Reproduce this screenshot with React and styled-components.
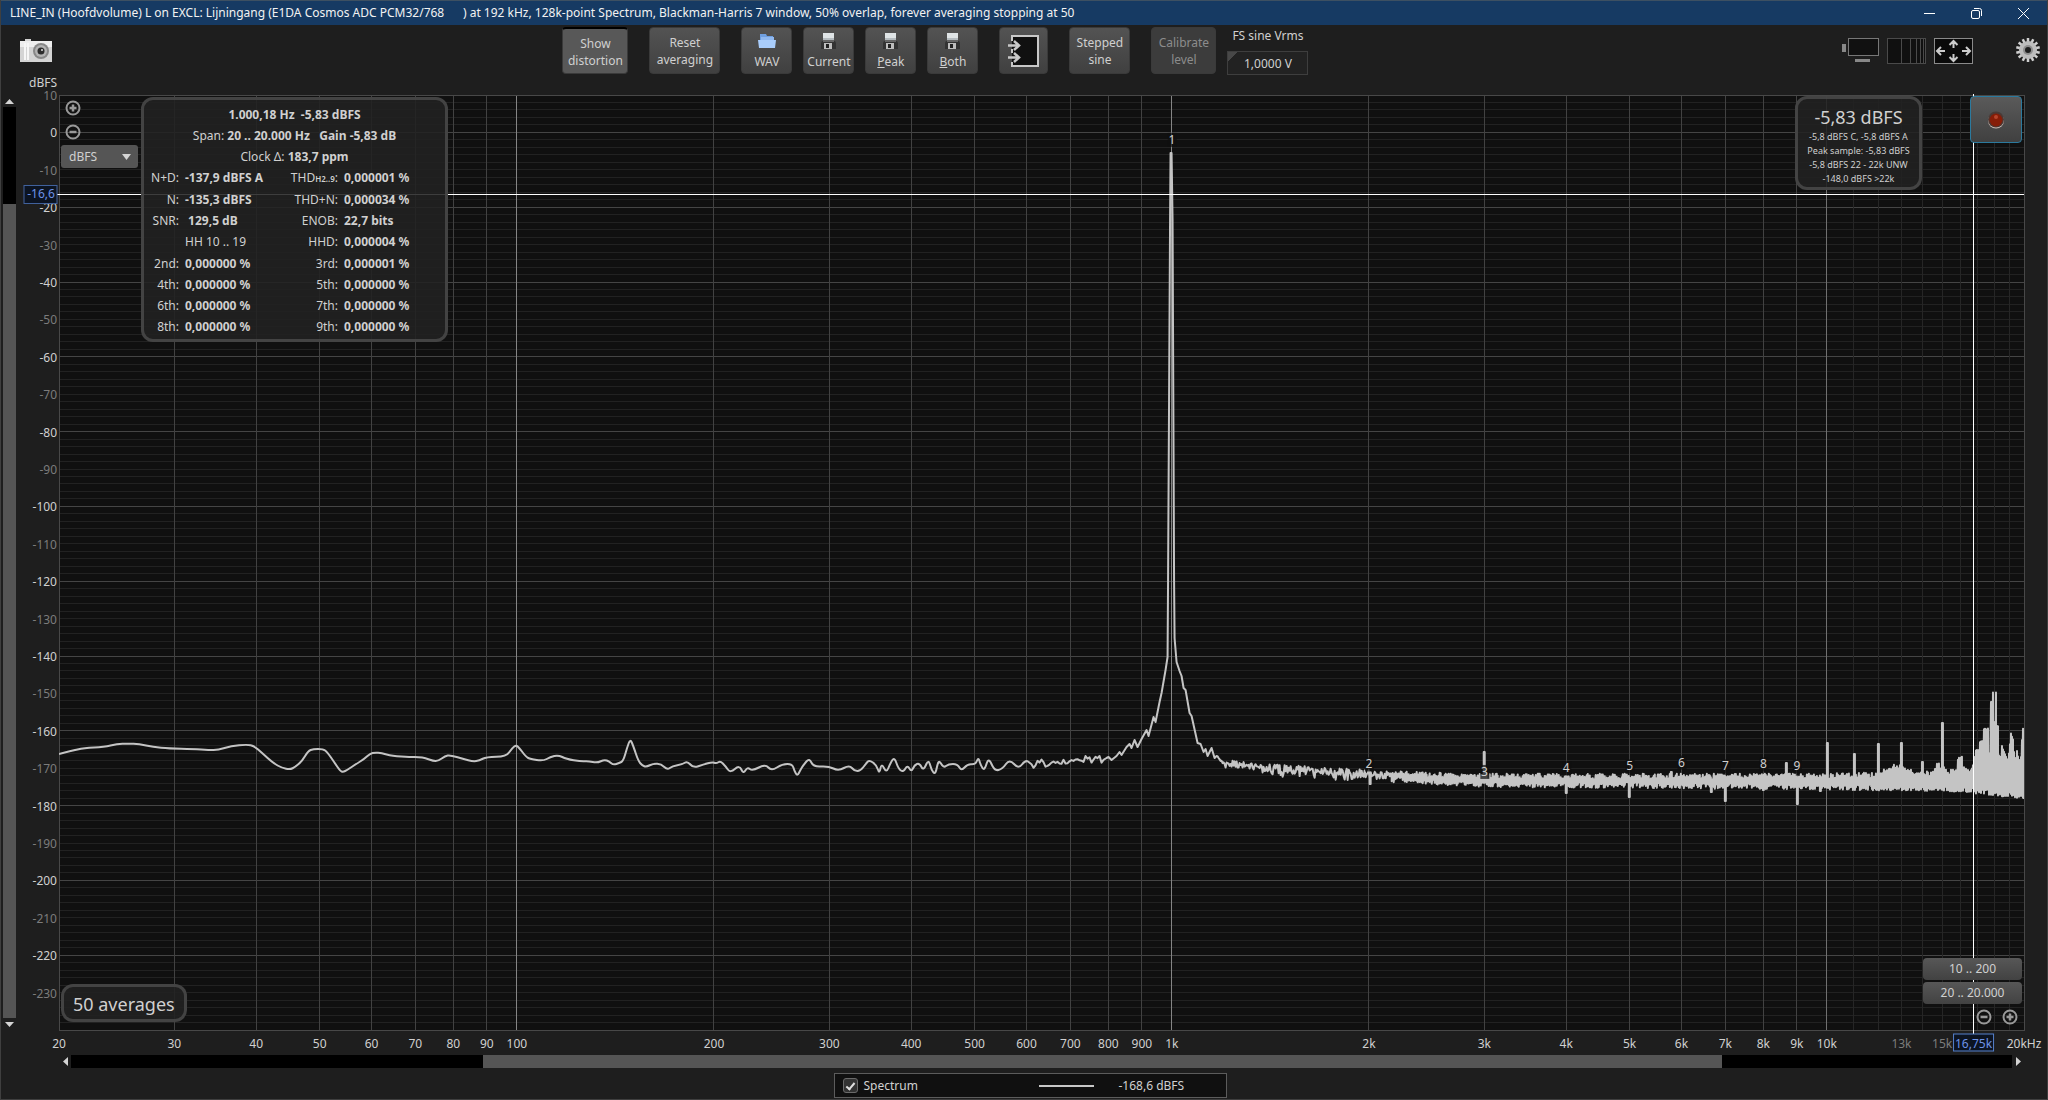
import { useState } from "react";
import styled, { createGlobalStyle } from "styled-components";

const GlobalStyle = createGlobalStyle`
  *, *::before, *::after {
    box-sizing: border-box;
  }
  body {
    margin: 0;
    background: #1e1e1e;
  }
  body, button, input, select {
    font-family: "Noto Sans", "Open Sans", sans-serif;
    font-size: 12px;
    line-height: 16px;
    color: #d0d0d0;
  }
`;

const Window = styled.div`
  display: flex;
  flex-direction: column;
  min-height: 100vh;
  border: solid #3f3f3f;
  border-width: 0 1px 1px;
`;

const TitleBar = styled.header`
  display: flex;
  align-items: center;
  justify-content: space-between;
  height: 25px;
  padding-left: 9px;
  background: #163a63;
  border-top: 1px solid #3d5062;
`;

const Title = styled.h1`
  margin: 0;
  font-size: 12px;
  font-weight: 400;
  line-height: 24px;
  color: #f2f2f2;
  white-space: pre;
`;

const WindowButtons = styled.div`
  display: flex;
`;

const WindowButton = styled.button`
  display: grid;
  place-items: center;
  width: 47px;
  height: 24px;
  padding: 0;
  border: 0;
  background: none;
`;

const Toolbar = styled.div`
  display: grid;
  grid-template-columns: 542fr auto 731fr;
  padding: 2px 7px 0 19px;
  height: 49px;
`;

const ToolGroup = styled.div`
  display: flex;
  gap: ${(props) => props.$gap || 11}px;
`;

const IconTools = styled.div`
  display: flex;
  align-items: flex-start;
  justify-content: ${(props) => (props.$end ? "flex-end" : "flex-start")};
  gap: 8px;
  padding-top: 11px;
`;

const IconButton = styled.button`
  display: block;
  padding: 0;
  border: 0;
  background: none;
  margin-left: ${(props) => (props.$apart ? 35 : 0)}px;

  svg {
    display: block;
  }
`;

const ToolButton = styled.button`
  display: flex;
  flex-direction: column;
  align-items: center;
  justify-content: center;
  gap: ${(props) => (props.$icon ? 4 : 0)}px;
  width: ${(props) => props.$width}px;
  height: 47px;
  padding: 1px 0 0;
  line-height: 17px;
  border: 1px solid #3a3a3a;
  border-radius: 4px;
  background: linear-gradient(#535353, #404040);

  &:disabled {
    color: #8c8c8c;
    background: #3c3c3c;
  }
  &[aria-pressed="true"] {
    background: #585858;
    border-top: 2px solid #000;
  }
`;

const FieldLabel = styled.label`
  display: flex;
  flex-direction: column;
  align-items: center;
  gap: 7px;
  width: 81px;
  padding-top: 1px;
`;

const VoltField = styled.input`
  width: 100%;
  height: 24px;
  padding: 0;
  text-align: center;
  border: 1px solid #3e3e3e;
  background: linear-gradient(135deg, #484848 7px, #222 7px);
`;

const Main = styled.main`
  flex: 1;
  display: grid;
  grid-template-columns: 14px 1fr;
  grid-template-rows: 1fr auto;
  column-gap: 42px;
  padding: 21px 23px 0 2px;
`;

const VerticalScroll = styled.div`
  display: flex;
  flex-direction: column;
  width: 13px;
`;

const HorizontalScroll = styled.div`
  grid-column: 2;
  display: flex;
  height: 13px;
  margin-top: 25px;
`;

const ScrollArrow = styled.button`
  display: grid;
  place-items: center;
  flex: 0 0 12px;
  padding: 0;
  border: 0;
  background: none;
`;

const Track = styled.div`
  flex: 1;
  display: flex;
  flex-direction: ${(props) => (props.$vertical ? "column" : "row")};
  background: #000;
`;

const Gap = styled.div`
  flex: ${(props) => props.$share};
`;

const Thumb = styled.div`
  flex: ${(props) => props.$share};
  background: #555;
`;

const Plot = styled.section`
  position: relative;
  background: #101010;
`;

const ChartSvg = styled.svg`
  position: absolute;
  inset: 0;
  width: 100%;
  height: 100%;
  overflow: visible;

  text {
    font-size: 12px;
    fill: #d0d0d0;
  }
  .dim {
    fill: #7c7c7c;
  }
  .marker {
    fill: #6d92e6;
  }
`;

const Overlay = styled.div`
  position: absolute;
  border: 3px solid rgba(74, 74, 74, 0.85);
  border-radius: 12px;
  background: rgba(33, 33, 33, 0.87);
`;

const DistortionPanel = styled(Overlay)`
  top: 2px;
  left: 82px;
  width: 307px;
  height: 245px;
  display: flex;
  flex-direction: column;
  gap: 5px;
  padding: 7px 0 4px;
`;

const Line = styled.div`
  text-align: center;
  white-space: pre;
`;

const Readings = styled.div`
  flex: 1;
  display: grid;
  grid-template-columns: 35px 94px 53px 1fr;
  column-gap: 6px;
  align-content: space-between;
`;

const Name = styled.span`
  display: flex;
  justify-content: flex-end;
  align-items: baseline;
  white-space: nowrap;

  small {
    font-size: 8px;
    font-weight: 600;
  }
`;

const Value = styled.b`
  white-space: pre;
  font-weight: ${(props) => (props.$plain ? 400 : 700)};
`;

const LevelPanel = styled(Overlay)`
  top: 1px;
  right: 102px;
  width: 127px;
  padding: 6px 0 1px;
  text-align: center;
  font-size: 9px;
  line-height: 14px;
`;

const Level = styled.div`
  font-size: 18px;
  line-height: 25px;
`;

const Averages = styled(Overlay)`
  left: 2px;
  bottom: 8px;
  padding: 5px 9px 2px;
  font-size: 18px;
  line-height: 25px;
`;

const ScaleControls = styled.div`
  position: absolute;
  top: 2px;
  left: 2px;
  display: flex;
  flex-direction: column;
  align-items: flex-start;
  gap: 5px;
`;

const RoundButton = styled.button`
  display: block;
  width: 16px;
  height: 16px;
  margin: 3px 4px 0;
  padding: 0;
  border: 0;
  background: none;

  svg {
    display: block;
  }
`;

const SelectWrap = styled.div`
  position: relative;
  width: 77px;
  height: 23px;

  svg {
    position: absolute;
    top: 9px;
    right: 7px;
    pointer-events: none;
  }
`;

const UnitSelect = styled.select`
  appearance: none;
  width: 100%;
  height: 100%;
  padding: 0 8px;
  border: 0;
  border-radius: 3px;
  background: #555;
`;

const RecordButton = styled.button`
  position: absolute;
  top: 1px;
  right: 2px;
  display: grid;
  place-items: center;
  width: 52px;
  height: 47px;
  padding: 0;
  border: 1px solid #2b7a9e;
  border-radius: 4px;
  background: linear-gradient(#5a5a5a, #404040);
`;

const RangeControls = styled.div`
  position: absolute;
  right: 2px;
  bottom: 5px;
  display: flex;
  flex-direction: column;
  gap: 2px;
  width: 99px;
`;

const RangeButton = styled.button`
  height: 22px;
  padding: 0;
  border: 0;
  border-radius: 4px;
  background: linear-gradient(#575757, #424242);
`;

const ZoomButtons = styled.div`
  display: flex;
  justify-content: flex-end;
  gap: 2px;
`;

const Footer = styled.footer`
  display: flex;
  justify-content: center;
  padding: 5px 0 1px 12px;
`;

const Legend = styled.div`
  display: grid;
  grid-template-columns: auto 1fr 55px 132px;
  align-items: center;
  width: 393px;
  height: 25px;
  padding-left: 8px;
  border: 1px solid #5c5c5c;
  background: #101010;
`;

const Check = styled.input`
  appearance: none;
  display: grid;
  place-items: center;
  width: 15px;
  height: 15px;
  margin: 0 6px 0 0;
  border: 1px solid #6a6a6a;
  border-radius: 3px;
  background: #333;

  &:checked::after {
    content: "";
    width: 5px;
    height: 9px;
    border: solid #e0e0e0;
    border-width: 0 2px 2px 0;
    transform: rotate(40deg);
  }
`;

const LegendLine = styled.span`
  height: 2px;
  background: #c8c8c8;
`;

const LegendValue = styled.span`
  padding-left: 25px;
`;

// axis helpers, both give a percentage of the plot area
const F_MIN = 20;
const F_MAX = 20000;
const DB_TOP = 10;
const DB_BOTTOM = -240;

const xOf = (freq) => `${(Math.log(freq / F_MIN) / Math.log(F_MAX / F_MIN)) * 100}%`;
const yOf = (db) => `${((DB_TOP - db) / (DB_TOP - DB_BOTTOM)) * 100}%`;

const freqLines = [];
[10, 100, 1000].forEach((decade) => {
  for (let n = 1; n < 10; n++) {
    if (n * decade >= F_MIN) freqLines.push({ f: n * decade, color: n === 1 ? "#858585" : "#424242" });
  }
});
freqLines.push({ f: 10000, color: "#707070" });
for (let f = 11000; f < F_MAX; f += 1000) freqLines.push({ f, color: "#262626" });

const dbLines = [];
for (let db = DB_TOP - 2; db > DB_BOTTOM; db -= 2) {
  dbLines.push({ db, color: db % 20 === 0 ? "#454545" : "#222222" });
}

const dbTicks = [];
for (let db = DB_TOP; db > DB_BOTTOM; db -= 10) dbTicks.push(db);

const freqTicks = [
  20, 30, 40, 50, 60, 70, 80, 90, 100, 200, 300, 400, 500, 600, 700, 800, 900,
  1000, 2000, 3000, 4000, 5000, 6000, 7000, 8000, 9000, 10000, 13000, 15000,
];

const harmonics = [
  [1, -2], [2, -169], [3, -171], [4, -170], [5, -169.5], [6, -168.5], [7, -169.5], [8, -169], [9, -169.5],
];

const lowBand = [
  [60, 754], [72, 751], [85, 748], [105, 747], [118, 744], [129, 743.5], [140, 744], [154, 747], [170, 748.5],
  [194, 749], [210, 750], [219, 750], [232, 746], [248, 744.5], [255, 746], [263, 753], [274, 763], [283, 768],
  [291, 769.5], [296, 767], [303, 761], [309, 751], [314, 749], [324, 749], [328, 752], [335, 762], [341, 771],
  [344, 772], [348, 770], [357, 764], [365, 759], [371, 753.5], [376, 752.5], [382, 753], [393, 756], [411, 757],
  [420, 757], [426, 758], [434, 761], [439, 761], [446, 756], [451, 755], [464, 759], [474, 761.5], [480, 760.5],
  [487, 757], [507, 756.5], [513, 748], [517, 745], [520, 748], [527, 757], [531, 759], [544, 761], [551, 757],
  [559, 755], [567, 759], [582, 761.5], [589, 761], [598, 763], [605, 759.5], [610, 761.5], [614, 765],
  [620, 763], [624, 761], [628, 747], [631, 739], [634, 746], [639, 761], [643, 765.5], [647, 767], [654, 763.5],
  [662, 764], [668, 770], [673, 766], [683, 764.5], [688, 761], [694, 768], [704, 764.5], [713, 762], [717, 763.5],
  [721, 761], [726, 766], [731, 773], [740, 765], [744, 774], [748, 767], [753, 771], [766, 764], [772, 771],
  [783, 764], [793, 764], [795, 771], [798, 776], [801, 770], [804, 765], [810, 758], [814, 767], [829, 766],
  [839, 771], [850, 765], [855, 771], [861, 771], [867, 763], [870, 760], [877, 765], [880, 774], [882, 763],
  [887, 773], [891, 763], [895, 757], [899, 769], [904, 772], [908, 765], [912, 772], [915, 765], [920, 763],
  [924, 771], [929, 759], [932, 770], [936, 775], [939, 759], [944, 768], [949, 764], [958, 764], [962, 771],
  [968, 764], [976, 764.5], [979, 757], [981, 765], [985, 771], [989, 757], [995, 771], [1003, 769], [1010, 759],
  [1019, 769], [1026, 760], [1031, 763],
];

const skirt = [
  [1107, 758], [1109, 757], [1112, 760], [1117, 756], [1120, 752], [1122, 755], [1127, 747], [1130, 744],
  [1132, 748], [1135, 740], [1138, 747], [1142, 739], [1147, 730], [1149, 736], [1154, 717], [1156, 722],
  [1160, 702], [1162, 693], [1166, 670], [1168, 657], [1168.5, 580], [1170.5, 220], [1171, 153], [1172, 153],
  [1173, 220], [1174.5, 580], [1175, 638], [1177, 662], [1180, 671], [1182, 676], [1184, 688], [1186, 690],
  [1190, 713], [1192, 716], [1198, 743], [1201, 744], [1204, 752], [1206, 749], [1208, 756], [1212, 748],
  [1215, 758], [1217, 756],
];

const bandTop = [
  [1218, 758], [1230, 763], [1270, 767], [1370, 773], [1484, 776], [1790, 776], [1878, 775], [1888, 769],
  [1892, 766], [1900, 767], [1909, 770], [1914, 775], [1932, 773], [1937, 765], [1942, 766], [1947, 773],
  [1957, 770], [1958, 758], [1962, 758], [1963, 766], [1970, 771], [1974, 763], [1976, 750], [1979, 750],
  [1980, 742], [1983, 741], [1984, 729], [1986, 729], [1987, 753], [1988, 728], [1989, 753], [1990, 753],
  [1991, 702], [1992, 702], [1993, 692], [1994, 722], [1995, 722], [1996, 692], [1997, 726], [1998, 726],
  [1999, 755], [2001, 758], [2002, 746], [2004, 752], [2006, 757], [2008, 762], [2010, 744], [2011, 733],
  [2013, 740], [2015, 764], [2017, 751], [2019, 762], [2021, 757], [2022, 740], [2023, 729], [2024, 729],
];

const bandBottom = [
  [1218, 761], [1230, 766], [1270, 771], [1370, 778], [1484, 784], [1640, 785], [1850, 787], [1940, 788],
  [1972, 790], [1990, 792], [2024, 796],
];

const spikes = {
  1370: 784, 1484: 752, 1566: 793, 1629: 797, 1671: 772, 1711: 792, 1725: 801, 1763: 790, 1786: 763, 1797: 804,
  1820: 791, 1827: 743, 1854: 754, 1878: 744, 1901: 743, 1922: 762, 1942: 723,
};

const noise = (seed) => {
  const v = Math.sin(seed * 127.1) * 43758.5453;
  return v - Math.floor(v);
};

const sample = (points, x) => {
  const i = Math.max(1, points.findIndex((p) => p[0] >= x));
  const [x0, y0] = points[i - 1];
  const [x1, y1] = points[i];
  return y0 + ((y1 - y0) * (x - x0)) / (x1 - x0);
};

const smoothPath = (points) =>
  points.slice(1, -1).reduce((d, [x, y], i) => {
    const next = points[i + 2];
    return `${d} Q${x} ${y} ${(x + next[0]) / 2} ${(y + next[1]) / 2}`;
  }, `M${points[0]}`);

const buildTrace = () => {
  let d = smoothPath(lowBand);
  for (let x = 1032; x < 1106; x += 2) {
    const middle = 764 - (x - 1032) / 13;
    d += ` L${x} ${middle + (noise(x) - 0.5) * 8}`;
  }
  skirt.forEach((p) => {
    d += ` L${p}`;
  });
  for (let x = 1218; x <= 2024; x++) {
    const top = sample(bandTop, x);
    const bottom = sample(bandBottom, x) + (noise(x + 0.5) - 0.5) * 6;
    if (x < 1390) {
      d += ` L${x} ${top - 3 + noise(x) * (bottom - top + 5)}`;
    } else {
      d += ` L${x} ${top + (0.6 - noise(x)) * (x > 1972 ? 1 : 6)} V${bottom}`;
    }
    if (spikes[x]) d += ` V${spikes[x]} h1 V${bottom}`;
  }
  return d;
};

const trace = buildTrace();

const formatFreq = (f) => (f >= 1000 ? `${f / 1000}k` : `${f}`);

const Chart = () => (
  <ChartSvg role="img" aria-label="Spectrum">
    <g shapeRendering="crispEdges">
      {dbLines.map(({ db, color }) => (
        <line key={db} x1="0" x2="100%" y1={yOf(db)} y2={yOf(db)} stroke={color} />
      ))}
      {freqLines.map(({ f, color }) => (
        <line key={f} x1={xOf(f)} x2={xOf(f)} y1="0" y2="100%" stroke={color} />
      ))}
      <rect width="100%" height="100%" fill="none" stroke="#484848" />
    </g>

    <svg viewBox="60 95 1964 935" width="100%" height="100%" preserveAspectRatio="none">
      <path d={trace} fill="none" stroke="#c4c4c4" strokeWidth="2" strokeLinejoin="round" vectorEffect="non-scaling-stroke" />
    </svg>

    {harmonics.map(([n, db]) => (
      <svg key={n} x={xOf(n * 1000)} y={yOf(db)} overflow="visible">
        <rect x="-4" y="-7" width="9" height="14" fill="#101010" opacity="0.7" />
        <text textAnchor="middle" dy="4">{n}</text>
      </svg>
    ))}

    <g shapeRendering="crispEdges" stroke="#fff">
      <line x1="-2" x2="100%" y1={yOf(-16.6)} y2={yOf(-16.6)} />
      <line x1={xOf(16750)} x2={xOf(16750)} y1="-1" y2="101%" />
    </g>

    <text x="-2" y="-8" textAnchor="end">dBFS</text>
    {dbTicks.map((db) => (
      <text key={db} x="-2" y={yOf(db)} dy="5" textAnchor="end" className={db % 20 === 0 ? undefined : "dim"}>
        {db}
      </text>
    ))}
    {freqTicks.map((f) => (
      <text key={f} x={xOf(f)} y="100%" dy="18" textAnchor="middle" className={f > 10000 ? "dim" : undefined}>
        {formatFreq(f)}
      </text>
    ))}
    <text x="100%" y="100%" dy="18" textAnchor="middle">20kHz</text>

    <svg x="-36" y={yOf(-16.6)} overflow="visible">
      <rect x="1" y="-9" width="33" height="18" fill="#0c1422" stroke="#42639f" />
      <text x="18" dy="4" textAnchor="middle" className="marker">-16,6</text>
    </svg>
    <svg x={xOf(16750)} y="100%" overflow="visible">
      <rect x="-20" y="4" width="40" height="17" fill="#0c1422" stroke="#5580cc" />
      <text dy="18" textAnchor="middle" className="marker">16,75k</text>
    </svg>
  </ChartSvg>
);

const FolderIcon = () => (
  <svg width="18" height="16" viewBox="0 0 18 16">
    <path d="M2 1h6l1 2h6v4H2z" fill="#6f9fe0" />
    <path d="M0 7h18l-1 8H1z" fill="#a9cdfb" />
    <path d="M3 4h13v3H3z" fill="#8fb8f0" />
  </svg>
);

const DiskIcon = () => (
  <svg width="15" height="16" viewBox="0 0 15 16">
    <path d="M1 8h13l1 2v6H0v-6z" fill="#333" />
    <path d="M2 0h11v7H2z" fill="#dfe4e6" />
    <path d="M2 5h11v2H2z" fill="#b5bcc0" />
    <path d="M2 7h11v2H2z" fill="#666" />
    <path d="M3 10h8v6H3z" fill="#bdbdbd" />
    <path d="M5 11h3v4H5z" fill="#222" />
  </svg>
);

const InputIcon = () => (
  <svg width="32" height="32" viewBox="0 0 32 32" fill="none" stroke="#c8c8c8">
    <path d="M4 1h26v30H4z" fill="#101010" stroke="none" />
    <path d="M4 6V1h26v30H4v-4M4 14v4" strokeWidth="2" />
    <path d="M0 10.500h10M6 6l5 4.500L6 15M0 22.500h10M6 18l5 4.500L6 27" strokeWidth="2.500" />
  </svg>
);

const CameraIcon = () => (
  <svg width="32" height="24" viewBox="0 0 32 24">
    <path d="M5 3V1h6v2h21v21H0V3z" fill="#d4d4d4" />
    <path d="M0 3h32v6H0z" fill="#eee" />
    <path d="M5 5v17M8 5v17" stroke="#f6f6f6" strokeWidth="2" />
    <circle cx="21" cy="13" r="8" fill="#888" />
    <circle cx="21" cy="13" r="6" fill="#b4b4b4" />
    <circle cx="21" cy="13" r="3.500" fill="#2c2c2c" />
    <circle cx="22" cy="12" r="1" fill="#ddd" />
  </svg>
);

const MonitorIcon = () => (
  <svg width="37" height="26" viewBox="0 0 37 26">
    <path d="M0 6h4v8H0zM13 21h15v3H13z" fill="#888" />
    <rect x="6.500" y="0.500" width="30" height="17" fill="#111" stroke="#777" />
  </svg>
);

const GridIcon = () => (
  <svg width="39" height="26" viewBox="0 0 39 26" fill="#101010" stroke="#4a4a4a">
    <rect x="0.500" y="0.500" width="38" height="25" />
    <path d="M14.500 0v26M23.500 0v26M29.500 0v26M33.500 0v26M36.500 0v26" />
  </svg>
);

const FitIcon = () => (
  <svg width="39" height="26" viewBox="0 0 39 26" fill="none" stroke="#ccc" strokeWidth="2">
    <rect x="0.500" y="0.500" width="38" height="25" fill="#0a0a0a" stroke="#8a8a8a" strokeWidth="1" />
    <path d="M11 13H4M7 9l-4 4 4 4M28 13h7M32 9l4 4-4 4M19.500 10V4M15.500 7l4-4 4 4M19.500 16v6M15.500 19l4 4 4-4" />
  </svg>
);

const GearIcon = () => (
  <svg width="24" height="24" viewBox="0 0 24 24">
    <g stroke="#cfcfcf" strokeWidth="2.500">
      {[0, 26, 51, 77, 103, 129, 154].map((angle) => (
        <path key={angle} d="M12 0v24" transform={`rotate(${angle} 12 12)`} />
      ))}
    </g>
    <circle cx="12" cy="12" r="9" fill="#bdbdbd" />
    <circle cx="12" cy="12" r="5" fill="#8e8e8e" />
    <circle cx="12" cy="12" r="3" fill="#1e1e1e" />
  </svg>
);

const RecordIcon = () => (
  <svg width="18" height="18" viewBox="0 0 18 18">
    <circle cx="9" cy="9.500" r="8" fill="#cdbdb6" />
    <circle cx="9" cy="8.500" r="8" fill="#4a3a36" />
    <circle cx="9" cy="9" r="6.500" fill="#861d08" />
    <circle cx="9" cy="6" r="2" fill="#b8452c" />
  </svg>
);

const RoundIcon = ({ plus }) => (
  <svg width="16" height="16" viewBox="0 0 16 16" fill="none" stroke="#999">
    <circle cx="8" cy="8" r="6.500" strokeWidth="2" />
    <path d={plus ? "M4.500 8h7M8 4.500v7" : "M4.500 8h7"} strokeWidth="2.500" />
  </svg>
);

const Triangle = ({ d, width = 9, height = 9 }) => (
  <svg width={width} height={height} viewBox={`0 0 ${width} ${height}`}>
    <path d={d} fill="#d4d4d4" />
  </svg>
);

const readings = [
  ["N+D:", "-137,9 dBFS A", <>THD<small>H2..9</small>:</>, "0,000001 %"],
  ["N:", "-135,3 dBFS", "THD+N:", "0,000034 %"],
  ["SNR:", " 129,5 dB", "ENOB:", "22,7 bits"],
  ["", "HH 10 .. 19", "HHD:", "0,000004 %"],
  ["2nd:", "0,000000 %", "3rd:", "0,000001 %"],
  ["4th:", "0,000000 %", "5th:", "0,000000 %"],
  ["6th:", "0,000000 %", "7th:", "0,000000 %"],
  ["8th:", "0,000000 %", "9th:", "0,000000 %"],
];

const Reading = ({ row: [name, value, otherName, otherValue] }) => (
  <>
    <Name>{name}</Name>
    <Value $plain={!name}>{value}</Value>
    <Name>{otherName}</Name>
    <Value>{otherValue}</Value>
  </>
);

const App = () => {
  const [visible, setVisible] = useState(true);
  const [distortion, setDistortion] = useState(true);
  const [volts, setVolts] = useState("1,0000 V");

  return (
    <Window>
      <GlobalStyle />
      <TitleBar>
        <Title>
          {"LINE_IN (Hoofdvolume) L on EXCL: Lijningang (E1DA Cosmos ADC PCM32/768      ) at 192 kHz, 128k-point Spectrum, Blackman-Harris 7 window, 50% overlap, forever averaging stopping at 50"}
        </Title>
        <WindowButtons>
          <WindowButton type="button" aria-label="Minimize">
            <svg width="11" height="11" stroke="#fff"><path d="M0 5.500h11" /></svg>
          </WindowButton>
          <WindowButton type="button" aria-label="Restore">
            <svg width="11" height="11" stroke="#fff" fill="none">
              <rect x="0.500" y="2.500" width="8" height="8" rx="1.500" />
              <path d="M3 .5h5.500a2 2 0 0 1 2 2V8" />
            </svg>
          </WindowButton>
          <WindowButton type="button" aria-label="Close">
            <svg width="11" height="11" stroke="#fff"><path d="M0 0l11 11M11 0L0 11" /></svg>
          </WindowButton>
        </WindowButtons>
      </TitleBar>

      <Toolbar>
        <IconTools>
          <IconButton type="button" aria-label="Capture"><CameraIcon /></IconButton>
        </IconTools>
        <ToolGroup $gap={21}>
          <ToolButton type="button" $width={66} aria-pressed={distortion} onClick={() => setDistortion(!distortion)}>
            <span>Show</span>
            <span>distortion</span>
          </ToolButton>
          <ToolButton type="button" $width={71}>
            <span>Reset</span>
            <span>averaging</span>
          </ToolButton>
          <ToolGroup>
            <ToolButton type="button" $width={51} $icon><FolderIcon /><span>WAV</span></ToolButton>
            <ToolButton type="button" $width={51} $icon><DiskIcon /><span>Current</span></ToolButton>
            <ToolButton type="button" $width={51} $icon><DiskIcon /><span><u>P</u>eak</span></ToolButton>
            <ToolButton type="button" $width={51} $icon><DiskIcon /><span><u>B</u>oth</span></ToolButton>
          </ToolGroup>
          <ToolButton type="button" $width={49} aria-label="Input"><InputIcon /></ToolButton>
          <ToolButton type="button" $width={61}>
            <span>Stepped</span>
            <span>sine</span>
          </ToolButton>
          <ToolGroup>
            <ToolButton type="button" $width={65} disabled>
              <span>Calibrate</span>
              <span>level</span>
            </ToolButton>
            <FieldLabel>
              FS sine Vrms
              <VoltField value={volts} onChange={(e) => setVolts(e.target.value)} />
            </FieldLabel>
          </ToolGroup>
        </ToolGroup>
        <IconTools $end>
          <IconButton type="button" aria-label="Display"><MonitorIcon /></IconButton>
          <IconButton type="button" aria-label="Grid"><GridIcon /></IconButton>
          <IconButton type="button" aria-label="Fit to data"><FitIcon /></IconButton>
          <IconButton type="button" aria-label="Settings" $apart><GearIcon /></IconButton>
        </IconTools>
      </Toolbar>

      <Main>
        <VerticalScroll>
          <ScrollArrow type="button" aria-label="Scroll up"><Triangle d="M0 7l4.500-5L9 7z" /></ScrollArrow>
          <Track $vertical>
            <Gap $share={97} />
            <Thumb $share={813} />
          </Track>
          <ScrollArrow type="button" aria-label="Scroll down"><Triangle d="M0 2l4.500 5L9 2z" /></ScrollArrow>
        </VerticalScroll>

        <Plot>
          <Chart />
          <ScaleControls>
            <RoundButton type="button" aria-label="Zoom in level"><RoundIcon plus /></RoundButton>
            <RoundButton type="button" aria-label="Zoom out level"><RoundIcon /></RoundButton>
            <SelectWrap>
              <UnitSelect aria-label="Unit"><option>dBFS</option></UnitSelect>
              <Triangle d="M0 0h9L4.500 6z" height={6} />
            </SelectWrap>
          </ScaleControls>

          {distortion && (
            <DistortionPanel>
              <Line><Value>{"1.000,18 Hz  -5,83 dBFS"}</Value></Line>
              <Line>Span: <Value>{"20 .. 20.000 Hz   Gain -5,83 dB"}</Value></Line>
              <Line>Clock Δ: <Value>183,7 ppm</Value></Line>
              <Readings>
                {readings.map((row) => <Reading key={row[0]} row={row} />)}
              </Readings>
            </DistortionPanel>
          )}

          <LevelPanel>
            <Level>-5,83 dBFS</Level>
            <div>-5,8 dBFS C, -5,8 dBFS A</div>
            <div>Peak sample: -5,83 dBFS</div>
            <div>-5,8 dBFS 22 - 22k UNW</div>
            <div>-148,0 dBFS &gt;22k</div>
          </LevelPanel>

          <RecordButton type="button" aria-label="Record"><RecordIcon /></RecordButton>
          <Averages>50 averages</Averages>

          <RangeControls>
            <RangeButton type="button">10 .. 200</RangeButton>
            <RangeButton type="button">20 .. 20.000</RangeButton>
            <ZoomButtons>
              <RoundButton type="button" aria-label="Zoom out frequency"><RoundIcon /></RoundButton>
              <RoundButton type="button" aria-label="Zoom in frequency"><RoundIcon plus /></RoundButton>
            </ZoomButtons>
          </RangeControls>
        </Plot>

        <HorizontalScroll>
          <ScrollArrow type="button" aria-label="Scroll left"><Triangle d="M7 0L2 4.500 7 9z" /></ScrollArrow>
          <Track>
            <Gap $share={412} />
            <Thumb $share={1238} />
            <Gap $share={290} />
          </Track>
          <ScrollArrow type="button" aria-label="Scroll right"><Triangle d="M2 0l5 4.500L2 9z" /></ScrollArrow>
        </HorizontalScroll>
      </Main>

      <Footer>
        <Legend>
          <Check id="spectrum" type="checkbox" checked={visible} onChange={() => setVisible(!visible)} />
          <label htmlFor="spectrum">Spectrum</label>
          <LegendLine />
          <LegendValue>-168,6 dBFS</LegendValue>
        </Legend>
      </Footer>
    </Window>
  );
};

export default App;
